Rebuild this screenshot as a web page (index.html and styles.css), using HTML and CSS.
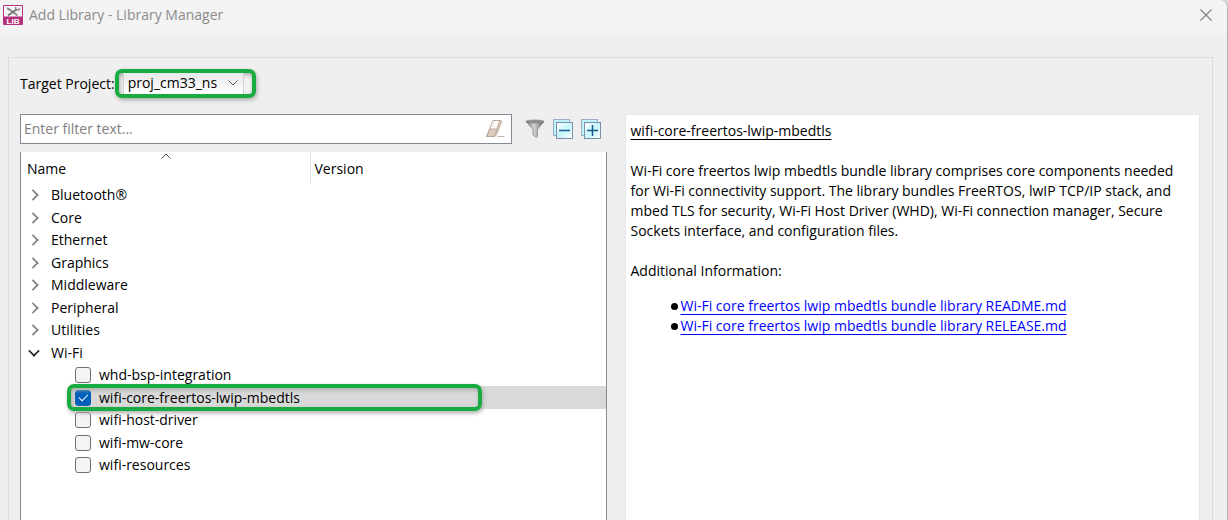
FILE: index.html
```html
<!DOCTYPE html>
<html lang="en">
<head>
  <meta charset="UTF-8">
  <title>Add Library - Library Manager</title>
  <link rel="stylesheet" href="styles.css">
</head>
<body>
<div class="window">

  <!-- TITLE BAR -->
  <header class="titlebar">
    <svg class="app-icon" width="20" height="20" viewBox="0 0 20 20" aria-hidden="true">
      <rect width="20" height="20" rx="1" fill="#b5307f"/>
      <rect x="1" y="1" width="18" height="10.500" fill="#f6f3f5"/>
      <path d="M6 4l8.500 6.500" stroke="#8d8a8c" stroke-width="1.800"/>
      <path d="M13.500 4.500L5 10.500" stroke="#77757a" stroke-width="2"/>
      <path d="M12.500 2l.5 2.500 2.500.5 1.500-1.500" stroke="#8d8a8c" stroke-width="1.500" fill="none"/>
      <path d="M3.500 2.500l3 .5.500 2-2 .5z" fill="#8d8a8c"/>
      <text x="10" y="18.500" text-anchor="middle" class="app-icon-text">LIB</text>
    </svg>
    <h1>Add Library - Library Manager</h1>
    <button class="close" aria-label="Close">
      <svg width="12" height="12" viewBox="0 0 12 12"><path d="M.5.5l11 11M11.500.5l-11 11" stroke="#858585" stroke-width="1.200"/></svg>
    </button>
  </header>

  <main class="group">
    <div class="project">
      <label for="project">Target Project:</label>
      <div class="select-wrap">
        <select id="project">
          <option>proj_cm33_ns</option>
        </select>
        <svg class="select-arrow" width="10" height="6" viewBox="0 0 10 6"><path d="M.5.5L5 5 9.500.5" fill="none" stroke="#555"/></svg>
      </div>
    </div>

    <div class="columns">
      <section class="left">
        <!-- FILTER -->
        <div class="toolbar">
          <div class="filter">
            <input type="text" placeholder="Enter filter text..." aria-label="Filter text">
            <button class="icon-btn" aria-label="Clear filter">
              <svg width="20" height="20" viewBox="0 0 20 20">
                <path d="M8 1.500h7l-5.500 16h-8z" fill="#fbf9f6" stroke="#b9aa9a"/>
                <path d="M5 10h7l-2.500 7.500h-8z" fill="#dccbb9" stroke="#b9aa9a"/>
                <path d="M15 1.500l2 .5-5 13.500-2.500 2z" fill="#d6c7b6" stroke="#b9aa9a" stroke-width=".6"/>
                <path d="M12.500 17.500h7" stroke="#c9b39c"/>
              </svg>
            </button>
          </div>
          <button class="icon-btn" aria-label="Filter">
            <svg width="20" height="20" viewBox="0 0 20 20">
              <defs><linearGradient id="metal"><stop offset="0" stop-color="#777"/><stop offset=".45" stop-color="#d2d2d2"/><stop offset="1" stop-color="#666"/></linearGradient></defs>
              <path d="M1 2.500L8 10.500V16l3.500 2.500 1-1V10.500L19 2.500z" fill="url(#metal)" stroke="#858585" stroke-width=".7"/>
              <ellipse cx="10" cy="2.500" rx="9" ry="1.500" fill="#8e8e8e" stroke="#777" stroke-width=".6"/>
            </svg>
          </button>
          <button class="icon-btn" aria-label="Collapse all">
            <svg width="20" height="20" viewBox="0 0 20 20">
              <defs><linearGradient id="pane" x2="1" y2="1"><stop offset="0" stop-color="#fff"/><stop offset=".5" stop-color="#c5f5fc"/><stop offset="1" stop-color="#fff"/></linearGradient></defs>
              <rect x=".5" y=".5" width="16" height="16" fill="#bdf3fa" stroke="#9dabc4"/>
              <rect x="3.500" y="3.500" width="16" height="16" fill="url(#pane)" stroke="#7e8dae"/>
              <path d="M6 11.500h11" stroke="#1c5a8c" stroke-width="1.500"/>
            </svg>
          </button>
          <button class="icon-btn" aria-label="Expand all">
            <svg width="20" height="20" viewBox="0 0 20 20">
              <rect x=".5" y=".5" width="16" height="16" fill="#bdf3fa" stroke="#9dabc4"/>
              <rect x="3.500" y="3.500" width="16" height="16" fill="url(#pane)" stroke="#7e8dae"/>
              <path d="M6 11.500h11M11.500 6v11" stroke="#1c5a8c" stroke-width="1.500"/>
            </svg>
          </button>
        </div>

        <!-- LIBRARY TREE -->
        <div class="tree">
          <table>
            <thead>
              <tr>
                <th class="name">Name
                  <svg class="sort" width="10" height="6" viewBox="0 0 10 6"><path d="M.5 5.500L5 1l4.500 4.500" fill="none" stroke="#555"/></svg>
                </th>
                <th>Version</th>
              </tr>
            </thead>
            <tbody>
              <tr><td><button class="node">Bluetooth®</button></td><td></td></tr>
              <tr><td><button class="node">Core</button></td><td></td></tr>
              <tr><td><button class="node">Ethernet</button></td><td></td></tr>
              <tr><td><button class="node">Graphics</button></td><td></td></tr>
              <tr><td><button class="node">Middleware</button></td><td></td></tr>
              <tr><td><button class="node">Peripheral</button></td><td></td></tr>
              <tr><td><button class="node">Utilities</button></td><td></td></tr>
              <tr><td><button class="node open" aria-expanded="true">Wi-Fi</button></td><td></td></tr>
              <tr class="leaf"><td><label><input type="checkbox">whd-bsp-integration</label></td><td></td></tr>
              <tr class="leaf selected"><td><label><input type="checkbox" checked>wifi-core-freertos-lwip-mbedtls</label><span class="highlight"></span></td><td></td></tr>
              <tr class="leaf"><td><label><input type="checkbox">wifi-host-driver</label></td><td></td></tr>
              <tr class="leaf"><td><label><input type="checkbox">wifi-mw-core</label></td><td></td></tr>
              <tr class="leaf"><td><label><input type="checkbox">wifi-resources</label></td><td></td></tr>
            </tbody>
          </table>
        </div>
      </section>

      <!-- DESCRIPTION -->
      <section class="info">
        <h2>wifi-core-freertos-lwip-mbedtls</h2>
        <p>Wi-Fi core freertos lwip mbedtls bundle library comprises core components needed for Wi-Fi connectivity support. The library bundles FreeRTOS, lwIP TCP/IP stack, and mbed TLS for security, Wi-Fi Host Driver (WHD), Wi-Fi connection manager, Secure Sockets interface, and configuration files.</p>
        <p>Additional Information:</p>
        <ul>
          <li><a href="#readme">Wi-Fi core freertos lwip mbedtls bundle library README.md</a></li>
          <li><a href="#release">Wi-Fi core freertos lwip mbedtls bundle library RELEASE.md</a></li>
        </ul>
      </section>
    </div>
  </main>
</div>
</body>
</html>
```
FILE: styles.css
```css
* {
  box-sizing: border-box;
}

body {
  margin: 0;
  background: #d8d8d8;
  font-family: "Open Sans", "Noto Sans", sans-serif;
  font-size: 14px;
  line-height: 20px;
  color: #000;
}

button, input, select {
  font: inherit;
  color: inherit;
}

button {
  border: 0;
  padding: 0;
  background: none;
}

.window {
  display: flex;
  flex-direction: column;
  height: 100vh;
  overflow: hidden;
  background: #efefef;
  border-right: 1px solid #b0b0b0;
  border-top-right-radius: 8px;
}

.titlebar {
  display: flex;
  align-items: center;
  gap: 6px;
  flex: none;
  height: 34px;
  padding: 0 15px 4px 3px;
  background: #f3f3f3;
}

.titlebar h1 {
  flex: 1;
  margin: 0;
  font-size: 14px;
  font-weight: normal;
  color: #8b8b8b;
}

.app-icon-text {
  font: bold 8px "Liberation Sans", sans-serif;
  fill: #fff;
}

.close {
  display: flex;
}

.group {
  display: flex;
  flex-direction: column;
  flex: 1;
  min-height: 0;
  margin: 23px 14px 0 8px;
  padding: 11px 12px 0 11px;
  border: 1px solid #dcdcdc;
  border-bottom: 0;
}

.project {
  display: flex;
  align-items: center;
  margin-bottom: 16px;
}

.select-wrap {
  position: relative;
  height: 29px;
  padding: 0 8px 0 4px;
  border: 4px solid #17ab42;
  border-radius: 7px;
  background: #f2f2f2;
  box-shadow: 1px 2px 4px #aaa, inset 1px 2px 4px #aaa;
}

.select-wrap select {
  appearance: none;
  display: block;
  width: 121px;
  height: 21px;
  padding: 0 24px 1px 4px;
  border: 1px solid #d0d0d0;
  border-width: 0 1px;
  background: linear-gradient(#e9e9e9, #fff);
}

.select-arrow {
  position: absolute;
  right: 14px;
  top: 7px;
  pointer-events: none;
}

.columns {
  display: grid;
  grid-template-columns: 586fr 575fr;
  gap: 18px;
  flex: 1;
  min-height: 0;
}

.left {
  display: flex;
  flex-direction: column;
  min-width: 0;
}

.toolbar {
  display: flex;
  align-items: center;
  gap: 8px;
  margin-bottom: 8px;
  padding-right: 6px;
}

.filter {
  display: flex;
  align-items: center;
  flex: 1;
  height: 30px;
  margin-right: 5px;
  padding: 0 6px 0 3px;
  border: 1px solid #858895;
  background: #fff;
}

.filter input {
  flex: 1;
  min-width: 0;
  padding: 0;
  border: 0;
  outline: 0;
  background: none;
}

.filter input::placeholder {
  color: #808080;
}

.icon-btn {
  display: flex;
}

.tree {
  flex: 1;
  border: 1px solid #858895;
  border-width: 0 1px;
  background: #fff;
}

table {
  width: 100%;
  border-collapse: collapse;
  table-layout: fixed;
}

th {
  position: relative;
  height: 32px;
  padding: 2px 0 0 4px;
  font-weight: normal;
  text-align: left;
}

th.name {
  width: 289px;
  padding-left: 6px;
  border-right: 1px solid #e2e2e2;
}

.sort {
  position: absolute;
  left: 140px;
  top: 1px;
}

td {
  height: 22px;
  padding: 0;
}

tr:nth-child(even) td {
  height: 23px;
}

.node, .leaf label {
  display: flex;
  align-items: center;
  line-height: 22px;
}

/* tree chevrons */
.node::before {
  content: "";
  width: 8px;
  height: 8px;
  margin: 0 13px 0 7px;
  border: solid #808080;
  border-width: 2px 2px 0 0;
  transform: rotate(45deg) scale(.8);
}

.node.open::before {
  margin: 0 12px 4px 8px;
  border-color: #222;
  transform: rotate(135deg) scale(.8);
}

.leaf td:first-child {
  padding-left: 49px;
  background-clip: content-box;
}

.leaf label {
  gap: 8px;
  padding-left: 5px;
}

.leaf input {
  appearance: none;
  flex: none;
  width: 16px;
  height: 16px;
  margin: 0;
  border: 1px solid #707070;
  border-radius: 3px;
  background: #f4f4f4;
}

.leaf input:checked {
  display: grid;
  place-items: center;
  border-color: #005fb8;
  background: #005fb8;
}

.leaf input:checked::before {
  content: "";
  width: 8px;
  height: 4px;
  margin-bottom: 3px;
  border: solid #fff;
  border-width: 0 0 1px 1px;
  transform: rotate(-45deg);
}

.selected {
  position: relative;
}

.selected td {
  background-color: #d9d9d9;
}

.highlight {
  position: absolute;
  left: 46px;
  top: -2px;
  width: 415px;
  height: 27px;
  border: 4px solid #17ab42;
  border-radius: 7px;
  box-shadow: 1px 2px 4px #aaa, inset 1px 2px 4px #aaa;
  pointer-events: none;
}

.info {
  min-width: 0;
  padding: 6px 5px;
  border: 1px solid #e6e6e6;
  border-bottom: 0;
  background: #fff;
}

.info h2 {
  margin: 0 0 20px;
  font-size: 14px;
  font-weight: normal;
  text-decoration: underline;
  text-underline-offset: 3px;
}

.info p {
  margin: 0 0 20px;
}

.info ul {
  margin: -5px 0 0;
  padding-left: 50px;
  list-style: none;
}

.info li {
  display: flex;
  align-items: center;
}

.info li::before {
  content: "";
  width: 7px;
  height: 7px;
  margin: 0 3px 0 -10px;
  border-radius: 50%;
  background: #000;
}

.info a {
  color: #00f;
  text-underline-offset: 3px;
}
```
